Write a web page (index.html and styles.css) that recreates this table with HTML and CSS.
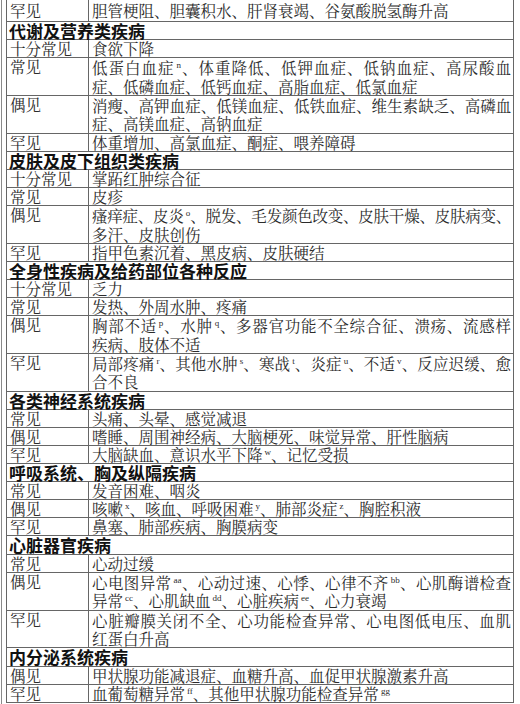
FILE: index.html
```html
<!DOCTYPE html>
<html lang="zh-CN">
<head>
<meta charset="utf-8">
<title>不良反应</title>
<link rel="stylesheet" href="styles.css">
</head>
<body>
<div class="page">
<table class="adr">
  <colgroup><col class="ck"><col class="cv"></colgroup>
  <tr class="first"><td class="k">罕见</td><td class="v">胆管梗阻、胆囊积水、肝肾衰竭、谷氨酸脱氢酶升高</td></tr>

  <tr class="sec"><td colspan="2">代谢及营养类疾病</td></tr>
  <tr><td class="k">十分常见</td><td class="v">食欲下降</td></tr>
  <tr><td class="k">常见</td><td class="v"><span class="ln">低蛋白血症<sup>n</sup>、体重降低、低钾血症、低钠血症、高尿酸血</span><span class="ln end">症、低磷血症、低钙血症、高脂血症、低氯血症</span></td></tr>
  <tr><td class="k">偶见</td><td class="v"><span class="ln tight">消瘦、高钾血症、低镁血症、低铁血症、维生素缺乏、高磷血</span><span class="ln end">症、高镁血症、高钠血症</span></td></tr>
  <tr><td class="k">罕见</td><td class="v">体重增加、高氯血症、酮症、喂养障碍</td></tr>

  <tr class="sec"><td colspan="2">皮肤及皮下组织类疾病</td></tr>
  <tr><td class="k">十分常见</td><td class="v">掌跖红肿综合征</td></tr>
  <tr><td class="k">常见</td><td class="v">皮疹</td></tr>
  <tr><td class="k">偶见</td><td class="v"><span class="ln tight">瘙痒症、皮炎<sup>o</sup>、脱发、毛发颜色改变、皮肤干燥、皮肤病变、</span><span class="ln end">多汗、皮肤创伤</span></td></tr>
  <tr><td class="k">罕见</td><td class="v">指甲色素沉着、黑皮病、皮肤硬结</td></tr>

  <tr class="sec"><td colspan="2">全身性疾病及给药部位各种反应</td></tr>
  <tr><td class="k">十分常见</td><td class="v">乏力</td></tr>
  <tr><td class="k">常见</td><td class="v">发热、外周水肿、疼痛</td></tr>
  <tr><td class="k">偶见</td><td class="v"><span class="ln">胸部不适<sup>p</sup>、水肿<sup>q</sup>、多器官功能不全综合征、溃疡、流感样</span><span class="ln end">疾病、肢体不适</span></td></tr>
  <tr><td class="k">罕见</td><td class="v"><span class="ln">局部疼痛<sup>r</sup>、其他水肿<sup>s</sup>、寒战<sup>t</sup>、炎症<sup>u</sup>、不适<sup>v</sup>、反应迟缓、愈</span><span class="ln end">合不良</span></td></tr>

  <tr class="sec"><td colspan="2">各类神经系统疾病</td></tr>
  <tr><td class="k">常见</td><td class="v">头痛、头晕、感觉减退</td></tr>
  <tr><td class="k">偶见</td><td class="v">嗜睡、周围神经病、大脑梗死、味觉异常、肝性脑病</td></tr>
  <tr><td class="k">罕见</td><td class="v">大脑缺血、意识水平下降<sup>w</sup>、记忆受损</td></tr>

  <tr class="sec"><td colspan="2">呼吸系统、胸及纵隔疾病</td></tr>
  <tr><td class="k">常见</td><td class="v">发音困难、咽炎</td></tr>
  <tr><td class="k">偶见</td><td class="v">咳嗽<sup>x</sup>、咳血、呼吸困难<sup>y</sup>、肺部炎症<sup>z</sup>、胸腔积液</td></tr>
  <tr><td class="k">罕见</td><td class="v">鼻塞、肺部疾病、胸膜病变</td></tr>

  <tr class="sec"><td colspan="2">心脏器官疾病</td></tr>
  <tr><td class="k">常见</td><td class="v">心动过缓</td></tr>
  <tr><td class="k">偶见</td><td class="v"><span class="ln">心电图异常<sup>aa</sup>、心动过速、心悸、心律不齐<sup>bb</sup>、心肌酶谱检查</span><span class="ln end">异常<sup>cc</sup>、心肌缺血<sup>dd</sup>、心脏疾病<sup>ee</sup>、心力衰竭</span></td></tr>
  <tr><td class="k">罕见</td><td class="v"><span class="ln">心脏瓣膜关闭不全、心功能检查异常、心电图低电压、血肌</span><span class="ln end">红蛋白升高</span></td></tr>

  <tr class="sec"><td colspan="2">内分泌系统疾病</td></tr>
  <tr><td class="k">偶见</td><td class="v">甲状腺功能减退症、血糖升高、血促甲状腺激素升高</td></tr>
  <tr><td class="k">罕见</td><td class="v">血葡萄糖异常<sup>ff</sup>、其他甲状腺功能检查异常<sup>gg</sup></td></tr>
</table>
</div>
</body>
</html>
```

FILE: styles.css
```css
html, body {
  margin: 0;
  padding: 0;
  background: #ffffff;
}

.page {
  width: 516px;
  margin-left: 1px;
  padding-left: 3px;
  border-left: 1px solid #8a8a8a;
  min-height: 704px;
  box-sizing: border-box;
}

.adr {
  border-collapse: collapse;
  width: 507px;
  margin-left: 1px;
  table-layout: fixed;
  font-family: "Noto Serif CJK SC", "Noto Sans CJK SC", serif;
  font-size: 15.5px;
  color: #2b2b2b;
}

.ck { width: 82px; }
.cv { width: 425px; }

.adr td {
  border: 1px solid #666666;
  padding: 0 2px 0 3px;
  line-height: 17px;
  vertical-align: top;
  white-space: nowrap;
}

.adr td.k {
  padding-left: 3px;
}

.adr tr.first td {
  height: 21px;
  vertical-align: middle;
  border-top: none;
}

.adr tr.sec td {
  font-family: "Noto Sans CJK SC", sans-serif;
  font-size: 17px;
  font-weight: 700;
  line-height: 17.4px;
  color: #111111;
  padding-left: 2px;
}

.ln {
  display: block;
  line-height: 18.35px;
  text-align: justify;
  text-align-last: justify;
}

.ln.end {
  text-align-last: left;
}

.ln.tight {
  letter-spacing: -0.3px;
}

sup {
  font-family: "Liberation Serif", serif;
  font-size: 9px;
  line-height: 0;
  vertical-align: 6px;
  margin-left: 2px;
  letter-spacing: 0;
}
```
